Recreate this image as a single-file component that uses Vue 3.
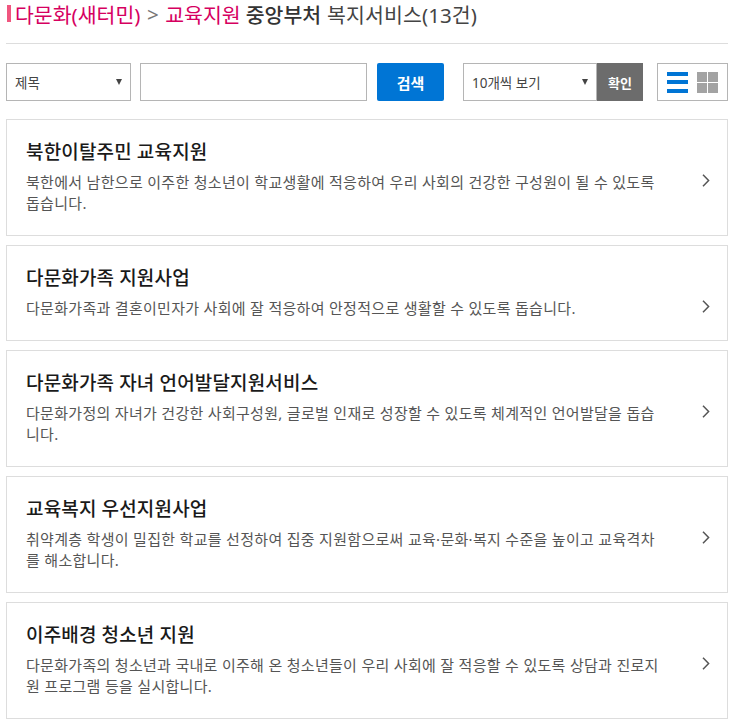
<template>
  <div class="page">
    <h2 class="heading">
      <span class="mark"></span>
      <em>다문화(새터민)</em>
      <span class="sep">&gt;</span>
      <em>교육지원</em>
      <span class="dept">중앙부처</span>
      <span class="count">복지서비스(13건)</span>
    </h2>

    <div class="toolbar">
      <div class="select field-type">
        <span>제목</span>
        <i class="caret"></i>
      </div>
      <input class="keyword" type="text" />
      <button class="btn-search">검색</button>
      <div class="select field-size">
        <span>10개씩 보기</span>
        <i class="caret"></i>
      </div>
      <button class="btn-ok">확인</button>
      <div class="view-toggle">
        <svg width="21" height="21" viewBox="0 0 21 21">
          <rect x="0" y="0" width="21" height="4" fill="#0075d5" />
          <rect x="0" y="8" width="21" height="4" fill="#0075d5" />
          <rect x="0" y="17" width="21" height="4" fill="#0075d5" />
        </svg>
        <svg width="21" height="21" viewBox="0 0 21 21">
          <rect x="0" y="0" width="10" height="10" fill="#a3a3a3" />
          <rect x="11" y="0" width="10" height="10" fill="#a3a3a3" />
          <rect x="0" y="11" width="10" height="10" fill="#a3a3a3" />
          <rect x="11" y="11" width="10" height="10" fill="#a3a3a3" />
        </svg>
      </div>
    </div>

    <ul class="list">
      <li v-for="item in items" :key="item.title" class="card">
        <div class="body">
          <h3>{{ item.title }}</h3>
          <p>{{ item.desc }}</p>
        </div>
        <svg class="chevron" width="8" height="13" viewBox="0 0 8 13">
          <path d="M1 0.8 L6.6 6.5 L1 12.2" fill="none" stroke="#555" stroke-width="1.5" />
        </svg>
      </li>
    </ul>
  </div>
</template>

<script setup>
const items = [
  {
    title: '북한이탈주민 교육지원',
    desc: '북한에서 남한으로 이주한 청소년이 학교생활에 적응하여 우리 사회의 건강한 구성원이 될 수 있도록 돕습니다.'
  },
  {
    title: '다문화가족 지원사업',
    desc: '다문화가족과 결혼이민자가 사회에 잘 적응하여 안정적으로 생활할 수 있도록 돕습니다.'
  },
  {
    title: '다문화가족 자녀 언어발달지원서비스',
    desc: '다문화가정의 자녀가 건강한 사회구성원, 글로벌 인재로 성장할 수 있도록 체계적인 언어발달을 돕습니다.'
  },
  {
    title: '교육복지 우선지원사업',
    desc: '취약계층 학생이 밀집한 학교를 선정하여 집중 지원함으로써 교육·문화·복지 수준을 높이고 교육격차를 해소합니다.'
  },
  {
    title: '이주배경 청소년 지원',
    desc: '다문화가족의 청소년과 국내로 이주해 온 청소년들이 우리 사회에 잘 적응할 수 있도록 상담과 진로지원 프로그램 등을 실시합니다.'
  }
]
</script>

<style>
body {
  background: #fff;
}
</style>

<style scoped>
.page {
  width: 722px;
  margin-left: 6px;
  font-family: "Noto Sans", "Noto Sans CJK KR", sans-serif;
  color: #333;
}

.heading {
  display: flex;
  align-items: center;
  gap: 6px;
  height: 27px;
  margin: 0;
  padding-bottom: 16px;
  border-bottom: 1px solid #ddd;
  font-size: 20.5px;
  font-weight: 400;
  white-space: nowrap;
}

.heading em {
  font-style: normal;
  font-weight: 400;
  color: #d6005f;
}

.mark {
  width: 4px;
  height: 17px;
  margin: 0 -2px 0 1px;
  background: #f0567f;
}

.sep {
  margin: 0 0.5px;
  color: #777;
}

.dept {
  margin-left: -1px;
  font-weight: 500;
  color: #333;
}

.count {
  color: #444;
  letter-spacing: 0.1px;
}

.toolbar {
  display: flex;
  align-items: stretch;
  height: 38px;
  margin-top: 19px;
}

.select {
  display: flex;
  align-items: center;
  justify-content: space-between;
  box-sizing: border-box;
  border: 1px solid #b5b5b5;
  padding: 0 8px;
  font-size: 13.5px;
  color: #444;
}

.caret {
  width: 0;
  height: 0;
  border-left: 3.2px solid transparent;
  border-right: 3.2px solid transparent;
  border-top: 6px solid #444;
}

.field-type {
  width: 125px;
}

.keyword {
  width: 227px;
  margin-left: 9px;
  box-sizing: border-box;
  border: 1px solid #b5b5b5;
  outline: none;
}

.btn-search {
  width: 67px;
  margin-left: 10px;
  border: 0;
  border-radius: 2px;
  background: #0075d5;
  color: #fff;
  font-family: inherit;
  font-size: 15px;
  font-weight: 700;
}

.field-size {
  width: 134px;
  margin-left: 19px;
}

.btn-ok {
  width: 46px;
  border: 0;
  padding: 0;
  background: #6c6c6c;
  color: #fff;
  font-family: inherit;
  font-size: 13px;
  font-weight: 700;
}

.view-toggle {
  display: flex;
  align-items: center;
  justify-content: center;
  gap: 9px;
  width: 71px;
  margin-left: 14px;
  box-sizing: border-box;
  border: 1px solid #b5b5b5;
}

.list {
  display: flex;
  flex-direction: column;
  gap: 9.3px;
  margin: 18px 0 0;
  padding: 0;
  list-style: none;
}

.card {
  display: flex;
  align-items: flex-start;
  justify-content: space-between;
  box-sizing: border-box;
  border: 1px solid #ddd;
  padding: 17px 17px 21.3px 19px;
}

.body {
  width: 636px;
}

.card h3 {
  margin: 0 0 5px;
  font-size: 19px;
  letter-spacing: 0.15px;
  line-height: 30px;
  font-weight: 500;
  color: #1a1a1a;
}

.card p {
  margin: 0;
  font-size: 15px;
  letter-spacing: 0.3px;
  line-height: 20.7px;
  color: #555;
}

.chevron {
  flex: none;
  margin-top: 37px;
}
</style>
